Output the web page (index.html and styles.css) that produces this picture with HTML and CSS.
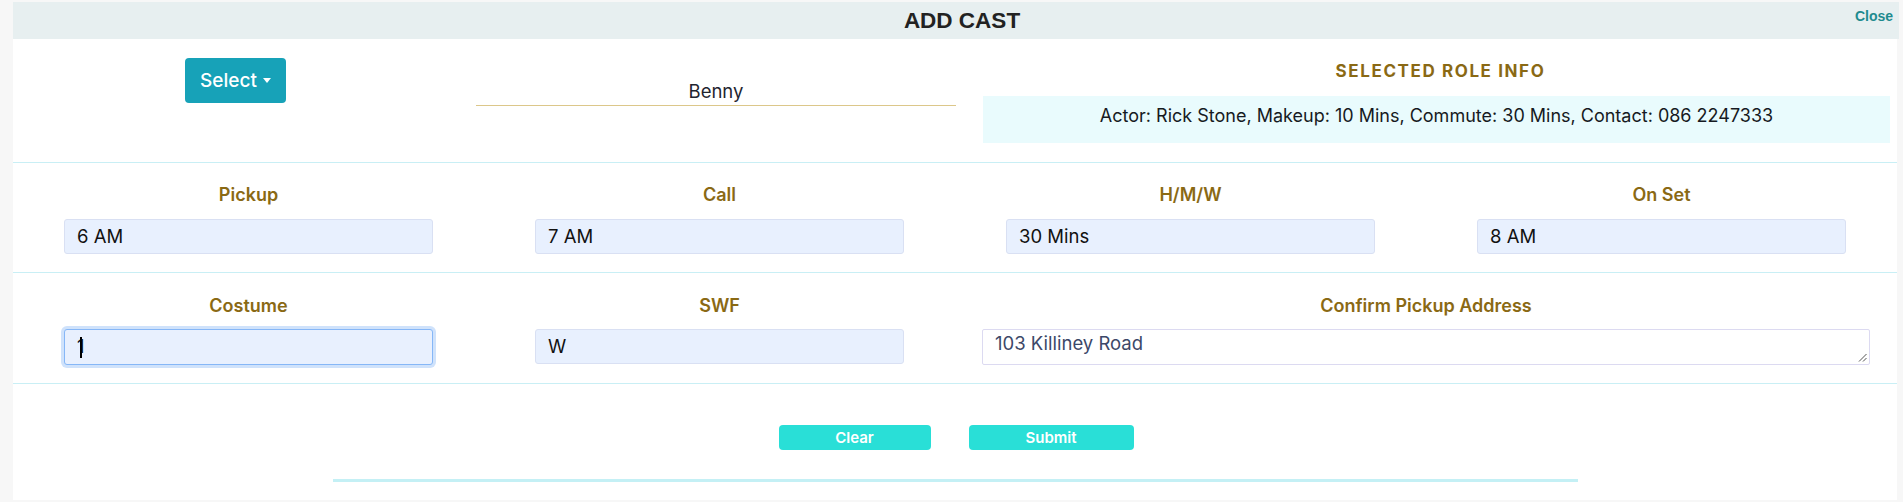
FILE: index.html
```html
<!DOCTYPE html>
<html>
<head>
<meta charset="utf-8">
<link rel="stylesheet" href="styles.css">
</head>
<body>
<div class="modal">
  <div class="modal-header">
    <div class="title">ADD CAST</div>
    <div class="close">Close</div>
  </div>
  <div class="modal-body">
    <div class="row row-top">
      <div class="cell-select">
        <button class="btn-select">Select<span class="caret"></span></button>
      </div>
      <div class="cell-name">
        <div class="name-field">Benny</div>
      </div>
      <div class="cell-info">
        <div class="info-title">SELECTED ROLE INFO</div>
        <div class="info-box">Actor: Rick Stone, Makeup: 10 Mins, Commute: 30 Mins, Contact: 086 2247333</div>
      </div>
    </div>
    <div class="row row-four">
      <div class="field">
        <div class="label">Pickup</div>
        <div class="input">6 AM</div>
      </div>
      <div class="field">
        <div class="label">Call</div>
        <div class="input">7 AM</div>
      </div>
      <div class="field">
        <div class="label">H/M/W</div>
        <div class="input">30 Mins</div>
      </div>
      <div class="field">
        <div class="label">On Set</div>
        <div class="input">8 AM</div>
      </div>
    </div>
    <div class="row row-three">
      <div class="field">
        <div class="label">Costume</div>
        <div class="input focused">1<span class="text-caret"></span></div>
      </div>
      <div class="field">
        <div class="label">SWF</div>
        <div class="input">W</div>
      </div>
      <div class="field">
        <div class="label">Confirm Pickup Address</div>
        <div class="textarea">103 Killiney Road
          <svg class="grip" width="9" height="9" viewBox="0 0 9 9"><path d="M8.5 1 L1 8.5 M8.5 5 L5 8.5" stroke="#555" stroke-width="1" fill="none"/></svg>
        </div>
      </div>
    </div>
    <div class="footer">
      <div class="actions">
        <button class="btn btn-clear">Clear</button>
        <button class="btn btn-submit">Submit</button>
      </div>
      <div class="footer-line"></div>
    </div>
  </div>
</div>
</body>
</html>
```
FILE: styles.css
```css
* { box-sizing: border-box; }
html, body { margin: 0; padding: 0; }
body {
  background: #f7f7f7;
  font-family: "Inter", "DejaVu Sans", sans-serif;
  width: 1903px;
  height: 502px;
  overflow: hidden;
}
.modal {
  margin-left: 13px;
  padding-top: 2px;
  width: 1886px;
}
.modal-header {
  position: relative;
  height: 37px;
  background: #e7eff0;
  display: flex;
  align-items: center;
  justify-content: center;
}
.title {
  font-family: "Liberation Sans", Arial, sans-serif;
  font-weight: bold;
  font-size: 22.5px;
  color: #222;
  margin-left: 12px;
}
.close {
  position: absolute;
  right: 6px;
  top: 6px;
  font-family: "Liberation Sans", Arial, sans-serif;
  font-weight: bold;
  font-size: 14px;
  color: #1f8b8f;
}
.modal-body {
  width: 1884px;
  background: #fff;
}
.row {
  border-bottom: 1px solid #c9eff5;
}
.row-top {
  display: grid;
  grid-template-columns: 445px 516px 923px;
  height: 124px;
}
.cell-select { padding-top: 19px; display: flex; justify-content: center; }
.btn-select {
  width: 101px;
  height: 45px;
  background: #17a2b8;
  color: #fff;
  border: none;
  border-radius: 4px;
  font-family: inherit;
  font-size: 19px;
  font-weight: 500;
  display: flex;
  align-items: center;
  justify-content: center;
  padding: 0;
}
.caret {
  display: inline-block;
  margin-left: 6px;
  border-top: 5px solid #fff;
  border-left: 4px solid transparent;
  border-right: 4px solid transparent;
}
.cell-name { padding: 0 18px; }
.name-field {
  margin-top: 40px;
  height: 27px;
  border-bottom: 1px solid #dcc78a;
  text-align: center;
  font-size: 18.5px;
  color: #1f2530;
  line-height: 24px;
}
.cell-info { padding: 0 7px 0 9px; }
.info-title {
  margin-top: 21px;
  text-align: center;
  font-size: 17px;
  font-weight: 700;
  letter-spacing: 1.6px;
  color: #8a6914;
  height: 22px;
  line-height: 22px;
  padding-left: 8px;
}
.info-box {
  margin-top: 14px;
  height: 47px;
  background: #e9fbfd;
  text-align: center;
  font-size: 18px;
  color: #161a22;
  line-height: 40px;
}
.row-four {
  display: grid;
  grid-template-columns: repeat(4, 471px);
  padding: 22px 0 18px;
}
.row-three {
  display: grid;
  grid-template-columns: 471px 471px 942px;
  padding: 23px 0 18px;
}
.field {
  display: flex;
  flex-direction: column;
  align-items: center;
}
.label {
  height: 20px;
  line-height: 20px;
  font-size: 18px;
  font-weight: 600;
  color: #8a6914;
  margin-bottom: 14px;
}
.row-three .label { margin-bottom: 13px; }
.input {
  width: 369px;
  height: 35px;
  background: #e8f0fe;
  border: 1px solid #d9e0f3;
  border-radius: 3px;
  padding: 0 12px;
  font-size: 18.5px;
  line-height: 33px;
  color: #111;
}
.input.focused {
  height: 36px;
  border-color: #86b7f7;
  box-shadow: 0 0 0 3px #cfe2fb;
}
.text-caret {
  display: inline-block;
  width: 2px;
  height: 21px;
  background: #000;
  vertical-align: middle;
  margin-left: -5px;
}
.textarea {
  position: relative;
  width: 888px;
  height: 36px;
  background: #fff;
  border: 1px solid #dcdaf1;
  border-radius: 2px;
  padding: 3px 12px;
  font-size: 18.5px;
  line-height: 20px;
  color: #3c4868;
}
.grip {
  position: absolute;
  right: 2px;
  bottom: 2px;
}
.footer {
  height: 116px;
  padding-top: 41px;
}
.actions {
  display: flex;
  justify-content: center;
  gap: 38px;
  margin-left: 2px;
}
.btn {
  height: 25px;
  border: none;
  border-radius: 4px;
  background: #29dfd7;
  color: #fff;
  font-family: inherit;
  font-size: 15px;
  font-weight: 600;
  padding: 0;
}
.btn-clear { width: 152px; }
.btn-submit { width: 165px; }
.footer-line {
  margin: 29px 0 0 320px;
  width: 1245px;
  height: 3px;
  background: #c4f0f5;
}
```
